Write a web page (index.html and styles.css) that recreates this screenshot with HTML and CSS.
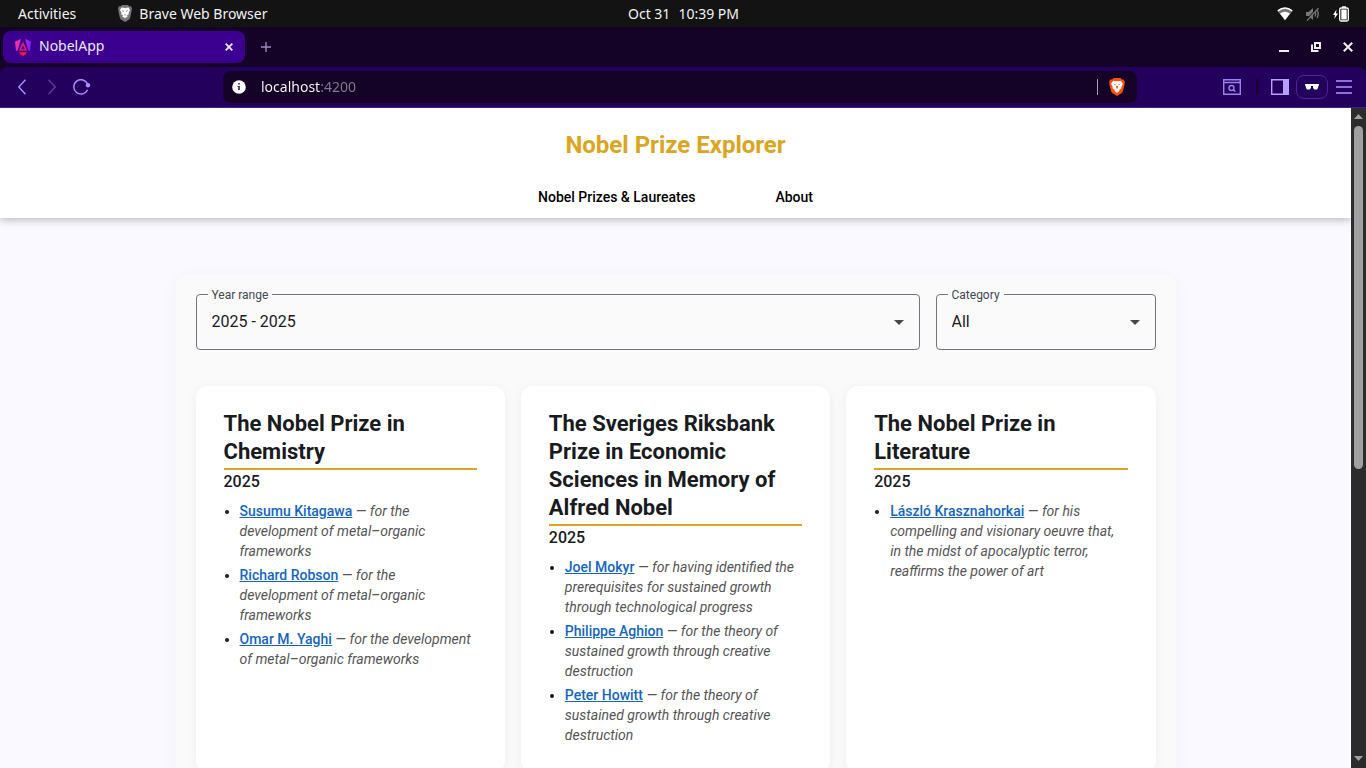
FILE: index.html
```html
<!DOCTYPE html>
<html lang="en">
<head>
<meta charset="utf-8">
<meta name="viewport" content="width=device-width, initial-scale=1">
<title>NobelApp</title>
<link rel="stylesheet" href="styles.css">
</head>
<body>
<div class="desktop-bar">
  <div class="desktop-left">
    <button class="desk-btn" type="button">Activities</button>
    <button class="desk-btn desk-app" type="button">
      <svg width="14" height="18" viewBox="0 0 14 18" aria-hidden="true"><path d="M4 0h6l1 1.300 2-.1 1 2.300-.4 1.200.1.800-1.600 7.600-1 1.300L7 17l-4.100-2.600-1-1.300L.3 5.500l.1-.8L0 3.500l1-2.300 2 .1z" fill="#777"/><path d="M3.500 2.500 7 3l3.500-.5L12 5l-1.400 2.800.2 1.400-1.500 1-.6.3 1 .8L7 13.200 4.300 11.300l1-.8-.6-.3-1.500-1 .2-1.400L2 5z" fill="#fff"/><path d="m3.800 5.300 2 .6-.4 1zm6.400 0-2 .6.400 1zM6 9.200l1 .5 1-.5-1 1.500z" fill="#555"/></svg>
      <span>Brave Web Browser</span>
    </button>
  </div>
  <button class="desk-btn clock" type="button"><span>Oct 31</span><span>10:39 PM</span></button>
  <div class="desktop-right">
    <svg width="16" height="14" viewBox="0 0 16 14" aria-hidden="true"><path d="M.5 4Q8-2.500 15.500 4L8 13.500z" fill="#777"/><path d="M3 6.500Q8 2.800 13 6.500L8 13z" fill="#fff"/><path d="M.8 3.800Q8-1.800 15.200 3.800" fill="none" stroke="#fff" stroke-width="1.500"/></svg>
    <svg width="16" height="14" viewBox="0 0 16 14" aria-hidden="true"><path d="M1 5h2.500L8 1v12L3.500 9H1z" fill="#777"/><path d="M10 4.500q1.500 2.500 0 5M12 3q2.500 4 0 8M2 13.500 13.500 1" fill="none" stroke="#777" stroke-width="1.400"/><path d="M1 13 12.500.500" stroke="#131313"/></svg>
    <svg width="16" height="16" viewBox="0 0 16 16" aria-hidden="true"><path d="M3.500 3.500 0 9h2l-.7 4L5 7.500H3z" fill="#fff"/><rect x="6.700" y="2" width="8.600" height="13" rx="1.500" fill="none" stroke="#fff" stroke-width="1.300"/><path d="M9 .2h4v1.500H9zM8.300 3.600h5.400v9.800H8.300z" fill="#fff"/></svg>
  </div>
</div>

<div class="tab-bar">
  <div class="tab">
    <svg width="16" height="17" viewBox="0 0 16 17" aria-hidden="true"><defs><linearGradient id="ng" x1="0" x2="1" gradientUnits="userSpaceOnUse" gradientTransform="scale(16 1)"><stop offset="0" stop-color="#f52a9d"/><stop offset=".4" stop-color="#e02fd0"/><stop offset="1" stop-color="#7a1df2"/></linearGradient></defs><path d="M0 2.600 5.900 0 2.700 11.200 1 12zM16 2.600 10.100 0l3.200 11.200L15 12z" fill="url(#ng)"/><path d="M8 4.500 5 11h6z" fill="none" stroke="#e41c72" stroke-width="1.600"/><path d="M4 13.300h8L11 15l-3 2-3-2z" fill="#ff1744"/></svg>
    <span class="tab-name">NobelApp</span>
    <button class="icon-btn" type="button" aria-label="Close tab"><svg width="8" height="8" viewBox="0 0 8 8"><path d="m.7.700 6.600 6.600M7.300.7.700 7.300" stroke="#eee9ff" stroke-width="1.800"/></svg></button>
  </div>
  <button class="icon-btn new-tab" type="button" aria-label="New tab"><svg width="10" height="10" viewBox="0 0 10 10"><path d="M5 0v10M0 5h10" stroke="#9a8abf" stroke-width="1.400"/></svg></button>
  <div class="window-controls">
    <button class="icon-btn" type="button" aria-label="Minimize"><svg width="10" height="10" viewBox="0 0 10 10"><path d="M0 8h10v2H0z" fill="#eee"/></svg></button>
    <button class="icon-btn" type="button" aria-label="Restore"><svg width="10" height="10" viewBox="0 0 10 10"><path d="M4 1h5v5H4zM1 2.500V9h6.500" fill="none" stroke="#eee" stroke-width="2"/></svg></button>
    <button class="icon-btn" type="button" aria-label="Close window"><svg width="10" height="10" viewBox="0 0 10 10"><path d="m.8.800 8.400 8.400M9.200.8.800 9.200" stroke="#eee" stroke-width="2"/></svg></button>
  </div>
</div>

<div class="toolbar">
  <div class="nav-tools">
    <button class="icon-btn" type="button" aria-label="Back"><svg width="8" height="16" viewBox="0 0 8 16"><path d="M7.500.8.800 8l6.700 7.200" fill="none" stroke="#a98bff" stroke-width="1.500"/></svg></button>
    <button class="icon-btn" type="button" aria-label="Forward"><svg width="8" height="16" viewBox="0 0 8 16"><path d="M.5.800 7.200 8 .5 15.200" fill="none" stroke="#5c3aa0" stroke-width="1.500"/></svg></button>
    <button class="icon-btn" type="button" aria-label="Reload"><svg width="18" height="16" viewBox="0 0 18 16"><path d="M14.600 10.800A7.200 7.200 0 1 1 14.700 5.200" fill="none" stroke="#a98bff" stroke-width="1.500"/><circle cx="15" cy="6.300" r="2.200" fill="#a98bff"/></svg></button>
  </div>
  <div class="address">
    <svg width="14" height="14" viewBox="0 0 14 14" aria-hidden="true"><circle cx="7" cy="7" r="6.800" fill="#fff"/><path d="M6 3h2v1.600H6zM5.500 6H8v4H6V7h-.5z" fill="#5b4a77"/></svg>
    <input class="url" type="text" value="localhost:4200" aria-label="Address">
    <span class="address-line"></span>
    <button class="icon-btn" type="button" aria-label="Brave Shields"><svg width="16" height="18" viewBox="0 0 16 18"><path d="M4.500 0h7l1.300 1.500 1.900-.1L16 4l-.5 1.300.2 1-1.900 7.200-1 1.500L8 18l-4.800-3-1-1.500L.3 6.300l.2-1L0 4l1.300-2.600 1.900.1z" fill="#fb4f12"/><path d="m4.300 2.800 2 .5L8 3l1.700.3 2-.5L14 5.700l-1.700 3 .2 1.500-1.600 1.200-1.400.5 1.200.8L8 14.700l-2.700-2 1.200-.8-1.400-.5-1.600-1.200.2-1.500-1.700-3z" fill="#fff"/><path d="m4.200 5.700 2.500.7-.4 1.200zM11.800 5.700l-2.500.7.4 1.200zM7 8h2l-.3 2.300L8 11l-.7-.7z" fill="#fb4f12"/></svg></button>
  </div>
  <div class="side-tools">
    <button class="icon-btn" type="button" aria-label="Search tabs"><svg width="18" height="16" viewBox="0 0 18 16"><path d="M.7.700h16.600v14.600H.7zM.7 3.500h16.600" fill="none" stroke="#9b80ee" stroke-width="1.400"/><circle cx="8.500" cy="9" r="2.500" fill="none" stroke="#9b80ee" stroke-width="1.400"/><path d="m10.300 10.800 2 2" stroke="#9b80ee" stroke-width="1.500"/></svg></button>
    <span class="tool-line"></span>
    <button class="icon-btn" type="button" aria-label="Sidebar"><svg width="18" height="16" viewBox="0 0 18 16"><path d="M.7.700h16.600v14.600H.7z" fill="none" stroke="#b79fff" stroke-width="1.400"/><path d="M12 0h6v16h-6z" fill="#b79fff"/></svg></button>
    <button class="icon-btn private" type="button" aria-label="Private profile"><svg width="14" height="6" viewBox="0 0 14 6"><path d="M0 0h14v1.500l-.8.500v1.500L12 5.500H9.500L8 4V2H6v2L4.500 5.500H2L.8 3.500V2L0 1.500z" fill="#fff"/></svg></button>
    <button class="icon-btn" type="button" aria-label="Menu"><svg width="16" height="14" viewBox="0 0 16 14"><path d="M0 1h16M0 7h16M0 13h16" stroke="#8d70df" stroke-width="2"/></svg></button>
  </div>
</div>

<div class="viewport">
  <div class="page">
    <header class="site-header">
      <h1 class="site-title">Nobel Prize Explorer</h1>
      <nav class="site-nav">
        <a href="#prizes">Nobel Prizes &amp; Laureates</a>
        <a href="#about">About</a>
      </nav>
    </header>
    <main class="panel">
      <form class="filters">
        <div class="field">
          <label for="years">Year range</label>
          <select id="years"><option>2025 - 2025</option></select>
          <svg class="caret" width="10" height="5" viewBox="0 0 10 5" aria-hidden="true"><path d="M0 0h10L5 5z"/></svg>
        </div>
        <div class="field">
          <label for="category">Category</label>
          <select id="category"><option>All</option></select>
          <svg class="caret" width="10" height="5" viewBox="0 0 10 5" aria-hidden="true"><path d="M0 0h10L5 5z"/></svg>
        </div>
      </form>
      <div class="cards">
        <article class="card">
          <h2>The Nobel Prize in Chemistry</h2>
          <p class="year">2025</p>
          <ul>
            <li><a href="#kitagawa">Susumu Kitagawa</a> <em>— for the development of metal–organic frameworks</em></li>
            <li><a href="#robson">Richard Robson</a> <em>— for the development of metal–organic frameworks</em></li>
            <li><a href="#yaghi">Omar M. Yaghi</a> <em>— for the development of metal–organic frameworks</em></li>
          </ul>
        </article>
        <article class="card">
          <h2>The Sveriges Riksbank Prize in Economic Sciences in Memory of Alfred Nobel</h2>
          <p class="year">2025</p>
          <ul>
            <li><a href="#mokyr">Joel Mokyr</a> <em>— for having identified the prerequisites for sustained growth through technological progress</em></li>
            <li><a href="#aghion">Philippe Aghion</a> <em>— for the theory of sustained growth through creative destruction</em></li>
            <li><a href="#howitt">Peter Howitt</a> <em>— for the theory of sustained growth through creative destruction</em></li>
          </ul>
        </article>
        <article class="card">
          <h2>The Nobel Prize in Literature</h2>
          <p class="year">2025</p>
          <ul>
            <li><a href="#krasznahorkai">László Krasznahorkai</a> <em>— for his compelling and visionary oeuvre that, in the midst of apocalyptic terror, reaffirms the power of art</em></li>
          </ul>
        </article>
      </div>
    </main>
  </div>
  <div class="scrollbar" aria-hidden="true">
    <svg width="9" height="5" viewBox="0 0 9 5"><path d="M0 5h9L4.500 0z" fill="#a0a0a0"/></svg>
    <div class="track"><div class="thumb"></div></div>
    <svg width="9" height="5" viewBox="0 0 9 5"><path d="M0 0h9L4.500 5z" fill="#a0a0a0"/></svg>
  </div>
</div>
</body>
</html>
```
FILE: styles.css
```css
* { box-sizing: border-box; }

body {
  margin: 0;
  height: 100vh;
  display: flex;
  flex-direction: column;
  overflow: hidden;
  background: #140326;
  color: #1a1b1f;
  font-family: Roboto, sans-serif;
}

button { font: inherit; color: inherit; background: none; border: 0; padding: 0; }
svg { display: block; flex: none; }
.icon-btn { display: flex; align-items: center; justify-content: center; flex: none; }

/* Desktop bar */
.desktop-bar,
.tab-bar,
.toolbar { font-family: "Noto Sans", "Open Sans", sans-serif; font-size: 14px; flex: none; }

.desktop-bar {
  display: grid;
  grid-template-columns: 1fr auto 1fr;
  align-items: center;
  height: 27px;
  padding: 0 17px 0 18px;
  background: #131313;
  color: #f2f2f2;
}
.desktop-left { display: flex; gap: 42px; }
.desk-btn { display: flex; align-items: center; line-height: 20px; }
.desk-app { gap: 7px; }
.clock { gap: 8px; }
.desktop-right { display: flex; align-items: center; justify-content: flex-end; gap: 12px; }

/* Tabs */
.tab-bar { display: flex; align-items: center; height: 40px; padding: 0 13px 0 3px; background: #140326; }
.tab {
  display: flex;
  align-items: center;
  gap: 8px;
  width: 242px;
  height: 32px;
  padding: 0 12px;
  border-radius: 8px;
  background: #3b008f;
  color: #eee9ff;
}
.tab-name { flex: 1; line-height: 20px; padding-bottom: 2px; }
.new-tab { margin-left: 16px; }
.window-controls { display: flex; gap: 22px; margin-left: auto; }

/* Toolbar */
.toolbar {
  display: flex;
  align-items: center;
  height: 41px;
  border-bottom: 1px solid #42208a;
  border-radius: 8px 8px 0 0;
  background: #22005c;
}
.nav-tools { display: flex; align-items: center; gap: 6px; width: 223px; padding-left: 10px; }
.nav-tools .icon-btn { width: 24px; }
.address {
  flex: 1;
  min-width: 0;
  display: flex;
  align-items: center;
  height: 32px;
  padding: 0 12px 0 9px;
  border-radius: 8px;
  background: #140326;
}
.url {
  flex: 1;
  min-width: 0;
  margin-left: 15px;
  padding: 0 0 2px;
  border: 0;
  font: inherit;
  background: linear-gradient(90deg, #fff 59px, #83798f 59px) text;
  color: transparent;
}
.address-line { width: 1px; height: 16px; margin-right: 11px; background: #a79db5; }
.side-tools { display: flex; align-items: center; justify-content: flex-end; width: 229px; padding-right: 14px; }
.tool-line { width: 2px; height: 16px; margin: 0 13px 0 15px; background: #140326; }
.private { width: 32px; height: 24px; margin: 0 8px 0 7px; border: 1px solid #4c2893; border-radius: 8px; }

/* Page area */
.viewport { flex: 1; min-height: 0; display: flex; }
.page { flex: 1; min-width: 0; overflow: hidden; background: #faf9ff; }
.scrollbar {
  display: flex;
  flex-direction: column;
  align-items: center;
  gap: 7px;
  width: 15px;
  padding: 6px 0 7px;
  background: #2c2c2c;
}
.track { flex: 1; width: 9px; }
.thumb { height: 55%; border-radius: 5px; background: #a0a0a0; }

.site-header {
  display: flex;
  flex-direction: column;
  align-items: center;
  gap: 26px;
  padding: 21px 16px 11px;
  background: #fff;
  box-shadow: 0 2px 8px rgba(0, 0, 0, .25);
}
.site-title { margin: 0; font-size: 24px; line-height: 32px; font-weight: 700; color: #daa520; }
.site-nav { display: flex; gap: 80px; }
.site-nav a { font-size: 14px; line-height: 20px; font-weight: 500; color: #000; text-decoration: none; }

.panel {
  max-width: 1000px;
  margin: 56px auto;
  padding: 20px;
  border-radius: 12px;
  background: #fafafa;
  box-shadow: 0 4px 20px rgba(0, 0, 0, .04);
}
.filters { display: grid; grid-template-columns: 1fr 220px; gap: 16px; margin-bottom: 36px; }
.field { position: relative; }
.field label {
  position: absolute;
  left: 12px;
  top: -7px;
  padding: 0 4px;
  background: #fafafa;
  font-size: 12px;
  line-height: 16px;
  color: #44474e;
}
.field select {
  display: block;
  width: 100%;
  height: 56px;
  padding: 0 15px 2px;
  appearance: none;
  border: 1px solid #74757f;
  border-radius: 4px;
  background: transparent;
  font-family: inherit;
  font-size: 16px;
  color: #1a1b1f;
}
.caret { position: absolute; right: 16px; top: 26px; fill: #44474e; pointer-events: none; }

.cards { display: grid; grid-template-columns: repeat(3, 1fr); gap: 16px; }
.card {
  padding: 24px 28px 28px;
  border-radius: 12px;
  background: #fff;
  box-shadow: 0 2px 12px rgba(0, 0, 0, .05);
}
.card h2 {
  margin: 0;
  padding-bottom: 2px;
  border-bottom: 2px solid #daa520;
  font-size: 22px;
  line-height: 28px;
  font-weight: 700;
}
.year { margin: 0 0 7px; font-size: 16px; line-height: 24px; font-weight: 500; }
.card ul { display: grid; gap: 4px; margin: 0; padding-left: 16px; }
.card li { font-size: 14px; line-height: 20px; }
.card a { font-weight: 500; color: #1565c0; }
.card em { color: #555; }
```
